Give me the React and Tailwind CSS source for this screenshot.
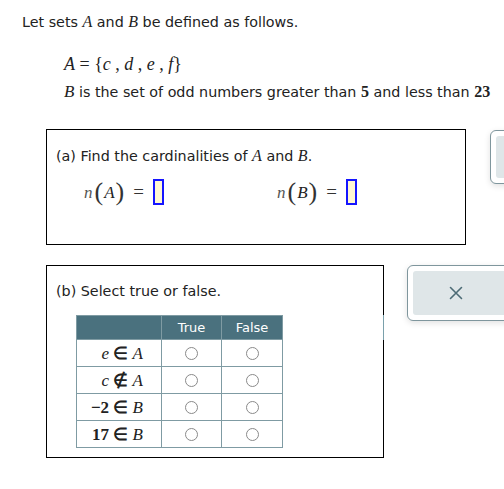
import React from "react";

const sans = { fontFamily: '"DejaVu Sans", Verdana, sans-serif' };
const serif = { fontFamily: '"Liberation Serif", "Times New Roman", serif' };

function M({ children, bold }) {
  return (
    <span className={`italic ${bold ? "font-bold" : ""}`} style={serif}>
      {children}
    </span>
  );
}

function Radio() {
  return <span className="inline-block w-[13px] h-[13px] rounded-full border border-[#8a8a8a] bg-white align-middle" />;
}

function InputBox() {
  return <span className="inline-block shrink-0 w-[11px] h-[26px] border-2 border-[#1515ff] bg-[#fff8d2] align-middle" />;
}

function NExpr({ letter, ml }) {
  return (
    <div className={`${ml} flex items-center shrink-0`} style={serif}>
      <span className="italic text-[17px] text-[#555]">n</span>
      <span className="text-[26px] font-light leading-none ml-[2px] text-[#333]">(</span>
      <span className="italic text-[17px] mx-[1px]">{letter}</span>
      <span className="text-[26px] leading-none text-[#333]">)</span>
      <span className="text-[19px] ml-[9px] mr-[9px] text-[#333]">=</span>
      <InputBox />
    </div>
  );
}

export default function App() {
  const rows = [
    <><M>e</M> <span className="not-italic font-bold">∈</span> <M>A</M></>,
    <><M>c</M> <span className="not-italic font-bold">∉</span> <M>A</M></>,
    <><span className="font-bold">−2</span> <span className="font-bold">∈</span> <M>B</M></>,
    <><span className="font-bold">17</span> <span className="font-bold">∈</span> <M>B</M></>,
  ];
  return (
    <div className="relative w-[504px] h-[489px] bg-white overflow-hidden text-[14.3px] text-[#222]" style={sans}>
      <div className="pt-[13px] pl-[22px] leading-[18px]">
        Let sets <span className="text-[16px]"><M>A</M></span> and <span className="text-[16px]"><M>B</M></span> be defined as follows.
      </div>
      <div className="pl-[64px] pt-[22px]">
        <div className="text-[18px] leading-[22px]" style={serif}>
          <i>A</i> = {"{"}<i>c</i> , <i>d</i> , <i>e</i> , <i>f</i>{"}"}
        </div>
        <div className="mt-[6px] leading-[20px] whitespace-nowrap">
          <span className="text-[17px]"><M>B</M></span> is the set of odd numbers greater than{" "}
          <span className="font-bold text-[16px]" style={serif}>5</span> and less than{" "}
          <span className="font-bold text-[16px]" style={serif}>23</span>
        </div>
      </div>

      <div className="flex items-start mt-[27px]">
        <div className="shrink-0 ml-[46px] w-[420px] h-[116px] border border-black pl-[9px] pt-[17px]">
          <div className="leading-[18px]">
            (a) Find the cardinalities of <span className="text-[16px]"><M>A</M></span> and <span className="text-[16px]"><M>B</M></span>.
          </div>
          <div className="flex mt-[13px] items-center">
            <NExpr letter="A" ml="ml-[28px]" />
            <NExpr letter="B" ml="ml-[113px]" />
          </div>
        </div>
        <div className="shrink-0 ml-[24px] mt-[1px] w-[60px] h-[54px] rounded-[6px] border border-[#7f969d] bg-white p-[5px] shadow-[0_2px_6px_rgba(0,0,0,0.12)]">
          <div className="w-full h-full rounded-[3px] bg-[#dfe6e8]" />
        </div>
      </div>

      <div className="flex items-start mt-[20px]">
        <div className="relative shrink-0 ml-[46px] w-[338px] h-[193px] border border-black pl-[9px] pt-[16px]">
          <div className="leading-[18px]">(b) Select true or false.</div>
          <div className="absolute right-[-1px] top-[49px] w-[1px] h-[25px] bg-[#7aa0ab]" />
          <table className="mt-[15px] ml-[20px] border-collapse text-[13px]">
            <thead>
              <tr className="bg-[#4a717e] text-white h-[24px]">
                <th className="w-[85px] border border-[#7f9ba3] font-normal"></th>
                <th className="w-[60px] border border-[#7f9ba3] font-normal">True</th>
                <th className="w-[61px] border border-[#7f9ba3] font-normal">False</th>
              </tr>
            </thead>
            <tbody>
              {rows.map((r, i) => (
                <tr key={i} className="h-[27px]">
                  <td className="border border-[#7f9ba3] text-right pr-[18px] text-[17px] leading-none" style={serif}>{r}</td>
                  <td className="border border-[#7f9ba3] text-center"><Radio /></td>
                  <td className="border border-[#7f9ba3] text-center"><Radio /></td>
                </tr>
              ))}
            </tbody>
          </table>
        </div>
        <div className="shrink-0 ml-[23px] w-[110px] h-[56px] rounded-[6px] border border-[#7f969d] bg-white p-[5px] shadow-[0_2px_6px_rgba(0,0,0,0.12)]">
          <div className="w-full h-full rounded-[3px] bg-[#dfe6e8] flex items-center pl-[36px]">
            <svg width="14" height="14" viewBox="0 0 14 14">
              <path d="M1.5 1.5 L12.5 12.5 M12.5 1.5 L1.5 12.5" stroke="#4c6b75" strokeWidth="1.6" strokeLinecap="round" />
            </svg>
          </div>
        </div>
      </div>
    </div>
  );
}
